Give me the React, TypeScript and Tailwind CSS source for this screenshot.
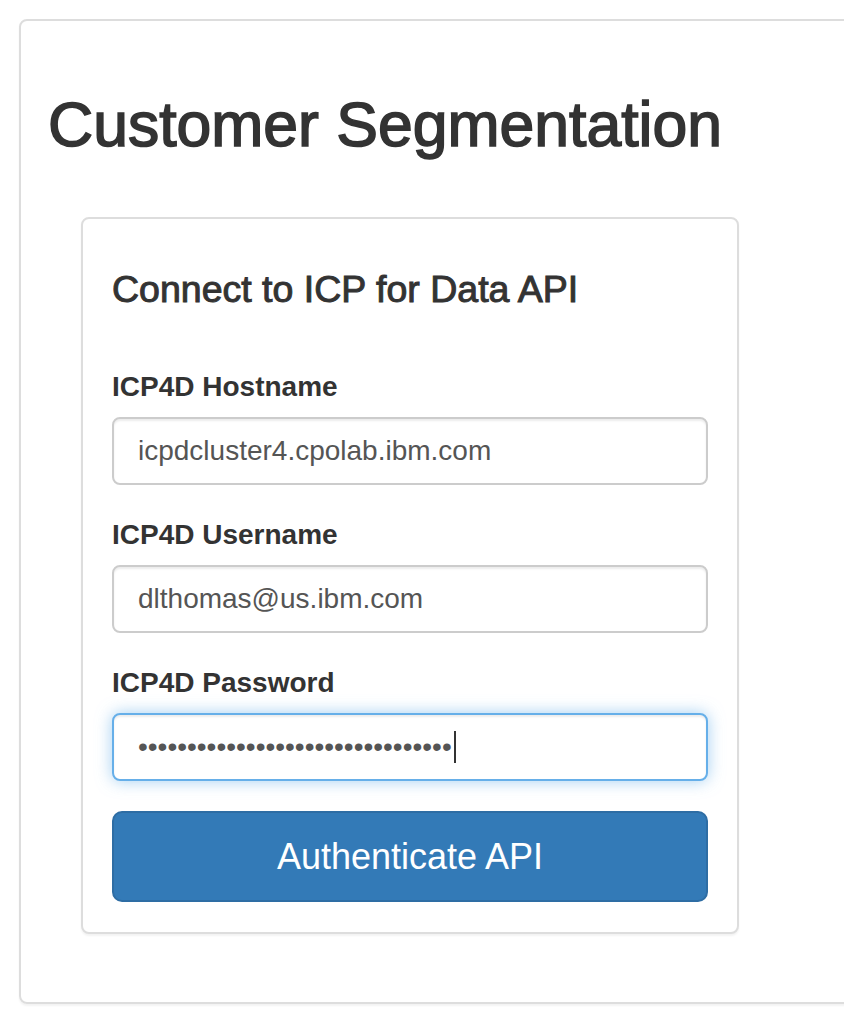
import React from "react"

const font = { fontFamily: '"Liberation Sans", Arial, Helvetica, sans-serif' }

type FieldProps = {
  label: string
  value: string
}

const Field = ({ label, value }: FieldProps) => (
  <div className="mb-[30px] flex flex-col">
    <label className="mb-[10px] text-[28px] font-bold leading-[40px] text-[#333]">{label}</label>
    <div className="flex h-[68px] items-center rounded-[8px] border-2 border-[#ccc] bg-white px-[24px] text-[28px] text-[#555] shadow-[inset_0_2px_2px_rgba(0,0,0,0.075)]">
      {value}
    </div>
  </div>
)

export default function App() {
  return (
    <div className="min-h-[1034px] overflow-hidden bg-white pt-[19px] text-[#333]" style={font}>
      <div className="ml-[19px] w-[900px] rounded-[8px] border-2 border-[#ddd] pb-[68px] shadow-[0_2px_2px_rgba(0,0,0,0.05)]">
        <h1 className="mt-[69px] pl-[27px] text-[62.5px] font-medium leading-[68px] text-[#333] [-webkit-text-stroke:1.6px_#333]">
          Customer Segmentation
        </h1>

        <div className="ml-[60px] mt-[59px] w-[658px] rounded-[8px] border-2 border-[#ddd] bg-white px-[29px] pb-[30px] pt-[50px] shadow-[0_2px_2px_rgba(0,0,0,0.05)]">
          <h4 className="mb-[58px] text-[37.5px] font-medium leading-[40px] text-[#333] [-webkit-text-stroke:1px_#333]">
            Connect to ICP for Data API
          </h4>

          <Field label="ICP4D Hostname" value="icpdcluster4.cpolab.ibm.com" />
          <Field label="ICP4D Username" value="dlthomas@us.ibm.com" />

          <div className="mb-[30px] flex flex-col">
            <label className="mb-[10px] text-[28px] font-bold leading-[40px] text-[#333]">ICP4D Password</label>
            <div className="flex h-[68px] items-center rounded-[8px] border-2 border-[#66afe9] bg-white px-[24px] text-[28px] text-[#555] shadow-[inset_0_2px_2px_rgba(0,0,0,0.075),0_0_16px_rgba(102,175,233,0.6)]">
              <span>{"•".repeat(32)}</span>
              <span className="ml-[2px] h-[32px] w-[2px] bg-[#333]" />
            </div>
          </div>

          <button
            type="button"
            className="flex h-[91px] w-full items-center justify-center rounded-[10px] border-2 border-[#2e6da4] bg-[#337ab7] text-[36px] text-white"
          >
            Authenticate API
          </button>
        </div>
      </div>
    </div>
  )
}
